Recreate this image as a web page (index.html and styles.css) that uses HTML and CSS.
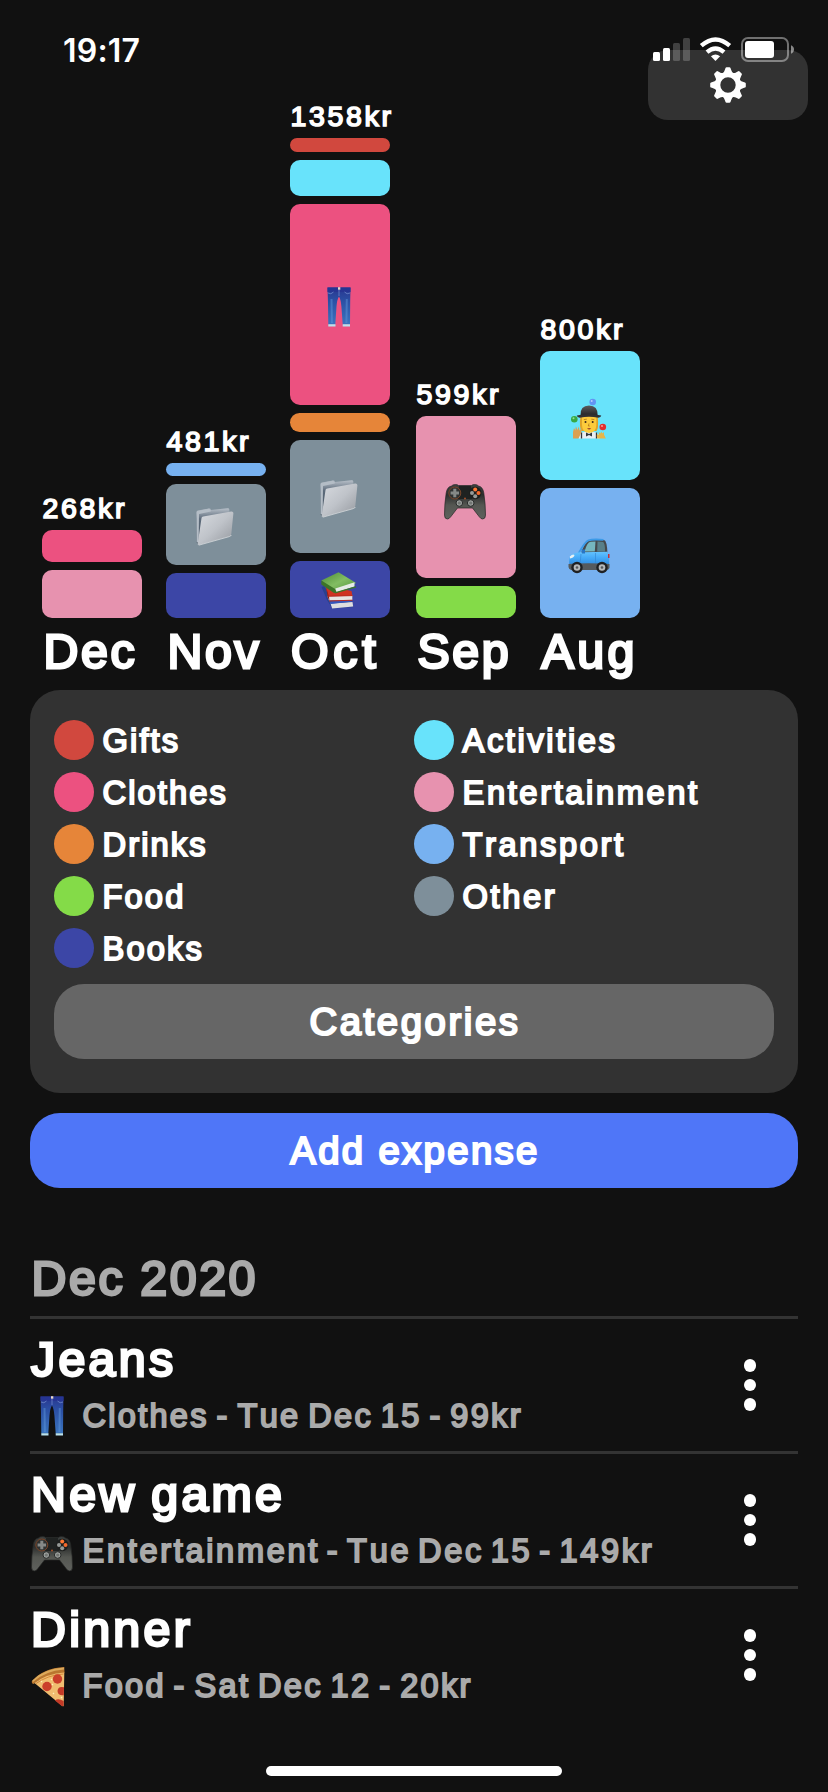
FILE: index.html
```html
<!DOCTYPE html>
<html lang="en">
<head>
<meta charset="utf-8">
<title>Expenses</title>
<link rel="stylesheet" href="styles.css">
</head>
<body>
<svg class="sprite" aria-hidden="true">
  <defs>
    <linearGradient id="gDenim" x1="0" y1="0" x2="0" y2="1"><stop offset="0" stop-color="#28368f"/><stop offset=".35" stop-color="#2b4fa4"/><stop offset="1" stop-color="#3a74be"/></linearGradient>
    <linearGradient id="gFolder" x1="0" y1="0" x2="1" y2="1"><stop offset="0" stop-color="#d8dbe0"/><stop offset=".5" stop-color="#bfc3c9"/><stop offset="1" stop-color="#93979d"/></linearGradient>
    <linearGradient id="gBack" x1="0" y1="0" x2="0" y2="1"><stop offset="0" stop-color="#b9c1ca"/><stop offset=".3" stop-color="#5d6b7b"/><stop offset="1" stop-color="#46525f"/></linearGradient>
    <linearGradient id="gPad" x1="0" y1="0" x2="0" y2="1"><stop offset="0" stop-color="#3e4241"/><stop offset=".3" stop-color="#2c2e2d"/><stop offset=".6" stop-color="#555752"/><stop offset="1" stop-color="#5f615d"/></linearGradient>
    <linearGradient id="gCar" x1="0" y1="0" x2="0" y2="1"><stop offset="0" stop-color="#63c3ff"/><stop offset=".4" stop-color="#45aaf8"/><stop offset="1" stop-color="#2c84d8"/></linearGradient>
    <linearGradient id="gBook" x1="0" y1="0" x2="1" y2="1"><stop offset="0" stop-color="#4c8b35"/><stop offset=".5" stop-color="#82bd62"/><stop offset="1" stop-color="#4f9238"/></linearGradient>
    <linearGradient id="gHat" x1="0" y1="0" x2="0" y2="1"><stop offset="0" stop-color="#5c5c5e"/><stop offset="1" stop-color="#242426"/></linearGradient>
  </defs>
  <symbol id="jeans" viewBox="0 0 42 42">
    <path d="M9.500 1.500h23l-.3 14-.2 23h-7.300l-1.300-18q-.6-7-2.400-10-2 3-2.500 10l-1.200 18H10.300l-.3-21z" fill="url(#gDenim)"/>
    <path d="M9.500 1.500h23v4.500h-23z" fill="#263593"/>
    <path d="M20 1.200h2.300v2.500H20z" fill="#e9d9c8"/>
    <path d="M10 7q3 2 5.500-1M32 7q-3 2-5.500-1M21 4v6" fill="none" stroke="#6f86cc" stroke-width=".8"/>
    <path d="M13.500 13l.4 24M28.800 13l-.4 24" stroke="#5b93d8" stroke-width="2" opacity=".5"/>
    <path d="M10.300 38.300h7.200v2.200h-7.200zM24.700 38.300H32v2.200h-7.300z" fill="#b9e2ee"/>
  </symbol>
  <symbol id="folder" viewBox="0 0 42 42">
    <path d="M2.500 6.300q0-1.500 1.500-1.800l11-1.900q1.600-.2 1.800 1.400l16.500-1.800q2-.3 2 1.200l.2 25-31.500 9q-1.200 0-1.300-1.200z" fill="url(#gBack)"/>
    <path d="M2.500 6.500q0-1.500 1.500-1.800l11-1.900 1.800 1.200v1.500L5 8l-.3 29-2-1z" fill="#b4bdc6"/>
    <path d="M7.500 12.300q.1-1.500 1.700-1.800l28-5q2.300-.2 2.200 1.800L37.300 28q-.2 2-2 2.500L5 39q-1.500.3-1.300-1.300z" fill="url(#gFolder)"/>
    <path d="M37.300 29q-.4 1.200-2 1.600L4.800 39.200" fill="none" stroke="#d6d9dc" stroke-width=".8"/>
  </symbol>
  <symbol id="books" viewBox="0 0 42 42">
    <path d="M3.500 16l3-1 4 9 24 7 1 5-21 1.500L9 29z" fill="#28408e"/>
    <path d="M12.500 32.500l22-1.500.7 4.500-21 2z" fill="#dedee0"/>
    <path d="M11 30.500l14-2 10 2-22 2.600z" fill="#3557bd"/>
    <path d="M7.500 14.500l26 5.500 1 5.200-24.500.6z" fill="#cf3322"/>
    <path d="M9.500 25.500l24.800-.8v4.200l-23.300.6z" fill="#e8e4e1"/>
    <path d="M8 16l2 11 1.500 3-.5-4.500z" fill="#8e1d16"/>
    <path d="M9.500 25.200l25-.6M11 30l23.500-.8" stroke="#b92c20" stroke-width="1"/>
    <path d="M3.300 9.500L20.500 1.300 38.200 12 17.500 21z" fill="url(#gBook)"/>
    <path d="M3.300 9.500v4L16 22l3-.5-1.500-3.300z" fill="#3c7428"/>
    <path d="M17.300 17.500L36.500 11.300v4.200L18.500 21.300z" fill="#e6ebe6"/>
    <path d="M17 21.800l21-6" stroke="#3a7729" stroke-width="1.200"/>
  </symbol>
  <symbol id="pad" viewBox="0 0 42 42">
    <path d="M7.500 8q1-1.500 4-1.500 2 0 3 1h13q1-1 3-1 3 0 4 1.500Q39 9 39.800 15q1.700 11 1.700 22 0 3.800-2.700 4-2 0-3.500-2.200L28.500 30h-15l-6.800 8.800Q5.200 41 3.200 41 .5 40.800.5 37q0-11 1.700-22Q3 9 7.500 8z" fill="url(#gPad)" stroke="#252625" stroke-width=".7"/>
    <path d="M15 8h12l1 13h-14z" fill="#1f2221"/>
    <circle cx="10.800" cy="15" r="6" fill="#303332" stroke="#7b4528" stroke-width="1"/>
    <path d="M9.300 10.800h3v2.700H15v3h-2.700v2.700h-3v-2.700H6.600v-3h2.700z" fill="#858987"/>
    <circle cx="31.200" cy="15" r="6.200" fill="#1d1f1e"/>
    <circle cx="31.200" cy="11.600" r="2" fill="#ff7733"/><circle cx="34.500" cy="15" r="2" fill="#f46a2d"/><circle cx="28" cy="15" r="2" fill="#969a98"/><circle cx="31.200" cy="18.300" r="2" fill="#969a98"/>
    <circle cx="15.300" cy="25" r="3.300" fill="#9a9e9b" stroke="#292b2a"/><circle cx="26.700" cy="25" r="3.300" fill="#9a9e9b" stroke="#292b2a"/>
    <circle cx="15.300" cy="25" r="1.600" fill="#727673"/><circle cx="26.700" cy="25" r="1.600" fill="#727673"/>
    <circle cx="21" cy="20.500" r="1" fill="#a5502a"/>
  </symbol>
  <symbol id="juggler" viewBox="0 0 42 42">
    <circle cx="24.700" cy="5" r="3.300" fill="#6295f3"/><circle cx="6.300" cy="22.300" r="3.300" fill="#37a844"/><circle cx="34.800" cy="30" r="3.300" fill="#e22d2d"/>
    <circle cx="23.700" cy="4" r="1" fill="#b6cffd"/><circle cx="5.500" cy="21.300" r="1" fill="#8fe099"/><circle cx="34" cy="29" r="1" fill="#ff9a9a"/>
    <path d="M10.500 41.500q0-6 6-6.500h9q6 .5 6 6.500z" fill="#e9edf2"/>
    <path d="M13.500 35.500v6M28.500 35.500v6" stroke="#33363b" stroke-width="1.300"/>
    <path d="M12.300 20h17.500q1 12-1.300 14h-15q-2.300-3-1.200-14z" fill="#dfa428"/>
    <path d="M14 19h14.300v9q0 7.500-7.200 8-7.100-.5-7.100-8z" fill="#fccb3c"/>
    <circle cx="17.500" cy="25" r="1" fill="#3b281d"/><circle cx="24.700" cy="25" r="1" fill="#3b281d"/>
    <path d="M15.800 22.600l3-.4M23.300 22.200l3 .4M21 26.500l-.7 2.500h1.500" fill="none" stroke="#af771b" stroke-width=".8"/>
    <path d="M19 31.400q2.100-1 4.200 0-2.100 2.300-4.200 0z" fill="#99422a"/>
    <path d="M18 35.500l3 1.500 3-1.500v4L21 38l-3 1.500z" fill="#33363b"/>
    <path d="M12.500 18.500Q12 8.500 21 8.500t8.700 10z" fill="url(#gHat)"/>
    <path d="M8.800 18.500q12.200-3 24.500 0-.3 2-3 2.300-9.300-2-18.600 0-2.700-.3-2.900-2.300z" fill="#303033"/>
    <path d="M5 41.500V35l1-4 1.300 2.500.6-4.300 1.500 3.800 1.500-3.600.5 4.100 2.400-2-.5 4-2.800 6z" fill="#dca052"/>
    <path d="M29.500 41.500q-1.500-3 0-4.500l1.500 1-.2-3 1.700 1.500.7-2 1.200 2 1.600-1.500v2.500l1.800 4z" fill="#e7b64a"/>
  </symbol>
  <symbol id="car" viewBox="0 0 42 42">
    <path d="M13 19.500q3-10 7-12.500Q24 4.500 36 6q3 .5 3.500 13.500z" fill="#45494d"/>
    <path d="M10.500 19.500Q17 7.500 20.500 6.300q4-1.300 15-.5" fill="none" stroke="#3b9ae8" stroke-width="1.800"/>
    <path d="M16.500 17.500q2.500-9 6-9.700L27.500 7.500 26.800 17.500z" fill="#75b6bf"/>
    <path d="M29.500 7.500l5.500.5q2 .5 2 9.500h-7.800z" fill="#587f89"/>
    <path d="M1.500 33q-1-7 .8-11.500Q6 18.500 13 18.200l26.500-.5q2.300 5 1.500 15.300z" fill="url(#gCar)"/>
    <path d="M27.500 19v13M13 20l-1 11" stroke="#3689d6" stroke-width=".7"/>
    <path d="M13.500 15.500h3.500v4h-3z" fill="#2876c6"/>
    <path d="M1.800 22.500q3-3 4.700-1.500-.3 2.500-4.500 3.500z" fill="#e7f0f2"/><path d="M40 20h1.500v4H40z" fill="#c52f36"/>
    <path d="M.5 30q20-1.500 41 0v4q-1 2-3 2H3q-2.500-1-2.500-3z" fill="#555a5d"/>
    <circle cx="9" cy="33.500" r="5.700" fill="#1f2123"/><circle cx="34" cy="33.500" r="5.700" fill="#1f2123"/>
    <circle cx="9" cy="33.500" r="3.300" fill="#b5b8b9"/><circle cx="34" cy="33.500" r="3.300" fill="#b5b8b9"/>
    <circle cx="9" cy="33.500" r="1.300" fill="#55595c"/><circle cx="34" cy="33.500" r="1.300" fill="#55595c"/>
  </symbol>
  <symbol id="pizza" viewBox="0 0 42 42">
    <path d="M.7 16.500Q12 3 33.300 2l.2 6Q16 9 2.500 19q-2-.5-1.800-2.500z" fill="#b9762f"/>
    <path d="M1.200 15.500Q13 3.500 33 2.500v2Q14 6 2 17z" fill="#dcaa5c"/>
    <path d="M3.500 18Q16 8.500 33.300 7.500L32.700 41q-.8.700-2-.5z" fill="#f0bd70"/>
    <path d="M5 18.500Q17 10 32.500 9" fill="none" stroke="#d58939" stroke-width="1"/>
    <circle cx="26.500" cy="14" r="4.700" fill="#cb3f2b"/><circle cx="16" cy="21.500" r="4.700" fill="#cb3f2b"/>
    <path d="M33 22.300q-6-1.500-6.500 3.700.5 5 6.300 4.200zM24 35.500q3-2.500 8.700.5L32.600 41l-1.600.2z" fill="#c33a27"/>
    <path d="M10 16l1 1M20 14l1 1M22 28l1 1M30 33l1-1M21 20l1-1" stroke="#fff0ba" stroke-width="1.300"/>
  </symbol>
</svg>

<div class="screen">
  <header class="status">
    <span class="clock">19:17</span>
    <svg class="status-icons" width="142" height="26" viewBox="0 0 142 26" fill="#fff">
      <rect x="0" y="15" width="7" height="9" rx="1.500"/><rect x="10" y="11" width="7" height="13" rx="1.500"/>
      <g opacity=".2"><rect x="20" y="6" width="7" height="18" rx="1.500"/><rect x="30" y="1" width="7" height="23" rx="1.500"/></g>
      <path d="M62.500 24l-4.600-4.700q4.600-3.400 9.200 0z"/>
      <g fill="none" stroke="#fff" stroke-width="4.300"><path d="M48.300 8.700q14.200-12.600 28.400 0"/><path d="M54 15.200q8.500-7.400 17 0"/></g>
      <rect x="89" y="1" width="46" height="23" rx="6" fill="none" stroke="#fff" stroke-opacity=".4" stroke-width="2"/>
      <rect x="92" y="4" width="29" height="17" rx="3"/>
      <path d="M138 8.300q3 1.300 3 4.200t-3 4.200z" opacity=".5"/>
    </svg>
  </header>

  <button class="settings" aria-label="Settings">
    <svg width="36" height="36" viewBox="-18 -18 36 36" fill="#fff">
      <defs><path id="tooth" d="M-6.500-11Q-3.700-12-3-15.500L-2.500-17Q-2.200-17.800-1.400-17.800H1.400Q2.200-17.800 2.500-17L3-15.500Q3.700-12 6.500-11L0-9z"/></defs>
      <circle r="10.200" fill="none" stroke="#fff" stroke-width="5"/>
      <use href="#tooth"/><use href="#tooth" transform="rotate(45)"/><use href="#tooth" transform="rotate(90)"/><use href="#tooth" transform="rotate(135)"/><use href="#tooth" transform="rotate(180)"/><use href="#tooth" transform="rotate(225)"/><use href="#tooth" transform="rotate(270)"/><use href="#tooth" transform="rotate(315)"/>
    </svg>
  </button>

  <section class="chart">
    <div class="column">
      <div class="amount">268kr</div>
      <div class="bars"><div class="bar clothes" style="height:32px"></div><div class="bar entertainment" style="height:48px"></div></div>
      <div class="month">Dec</div>
    </div>
    <div class="column">
      <div class="amount">481kr</div>
      <div class="bars"><div class="bar transport" style="height:13px"></div><div class="bar other" style="height:81px"><svg class="emoji"><use href="#folder"/></svg></div><div class="bar books" style="height:45px"></div></div>
      <div class="month">Nov</div>
    </div>
    <div class="column wide">
      <div class="amount">1358kr</div>
      <div class="bars"><div class="bar gifts" style="height:14px"></div><div class="bar activities" style="height:36px"></div><div class="bar clothes" style="height:201px"><svg class="emoji"><use href="#jeans"/></svg></div><div class="bar drinks" style="height:19px"></div><div class="bar other" style="height:113px"><svg class="emoji"><use href="#folder"/></svg></div><div class="bar books" style="height:57px"><svg class="emoji"><use href="#books"/></svg></div></div>
      <div class="month month-oct">Oct</div>
    </div>
    <div class="column">
      <div class="amount">599kr</div>
      <div class="bars"><div class="bar entertainment" style="height:162px"><svg class="emoji"><use href="#pad"/></svg></div><div class="bar food" style="height:32px"></div></div>
      <div class="month">Sep</div>
    </div>
    <div class="column">
      <div class="amount">800kr</div>
      <div class="bars"><div class="bar activities" style="height:129px"><svg class="emoji"><use href="#juggler"/></svg></div><div class="bar transport" style="height:130px"><svg class="emoji"><use href="#car"/></svg></div></div>
      <div class="month month-aug">Aug</div>
    </div>
  </section>

  <section class="panel">
    <div class="legend">
      <div class="legend-col">
        <div class="key"><i class="dot gifts"></i><span>Gifts</span></div>
        <div class="key"><i class="dot clothes"></i><span>Clothes</span></div>
        <div class="key"><i class="dot drinks"></i><span>Drinks</span></div>
        <div class="key"><i class="dot food"></i><span>Food</span></div>
        <div class="key"><i class="dot books"></i><span>Books</span></div>
      </div>
      <div class="legend-col loose">
        <div class="key"><i class="dot activities"></i><span>Activities</span></div>
        <div class="key"><i class="dot entertainment"></i><span>Entertainment</span></div>
        <div class="key"><i class="dot transport"></i><span>Transport</span></div>
        <div class="key"><i class="dot other"></i><span>Other</span></div>
      </div>
    </div>
    <button class="button secondary">Categories</button>
  </section>

  <button class="button primary">Add expense</button>

  <h2 class="heading">Dec 2020</h2>
  <ul class="list">
    <li class="row">
      <div><div class="title">Jeans</div><div class="detail"><svg class="emoji"><use href="#jeans"/></svg><span class="tight">Clothes - Tue Dec 15 - 99kr</span></div></div>
      <div class="more"><i></i><i></i><i></i></div>
    </li>
    <li class="row">
      <div><div class="title">New game</div><div class="detail"><svg class="emoji"><use href="#pad"/></svg><span>Entertainment - Tue Dec 15 - 149kr</span></div></div>
      <div class="more"><i></i><i></i><i></i></div>
    </li>
    <li class="row">
      <div><div class="title">Dinner</div><div class="detail"><svg class="emoji"><use href="#pizza"/></svg><span class="tight">Food - Sat Dec 12 - 20kr</span></div></div>
      <div class="more"><i></i><i></i><i></i></div>
    </li>
  </ul>
  <div class="home-bar"></div>
</div>
</body>
</html>
```

FILE: styles.css
```css
* { box-sizing: border-box; }
body {
  margin: 0;
  background: #111;
  color: #fff;
  font-family: "Liberation Sans", Arial, sans-serif;
  font-kerning: none;
}
.sprite { position: absolute; width: 0; height: 0; }
.screen {
  position: relative;
  width: 828px;
  height: 1792px;
  overflow: hidden;
  display: flex;
  flex-direction: column;
}

/* Status bar floats over the content */
.status {
  position: absolute;
  inset: 0 0 auto 0;
  z-index: 2;
  display: flex;
  justify-content: space-between;
  padding: 37px 33px 0 63px;
}
.clock {
  font: 600 32px/27px Inter, sans-serif;
  letter-spacing: .2px;
}
.settings {
  position: absolute;
  top: 50px;
  right: 20px;
  width: 160px;
  height: 70px;
  padding: 0 1px 0 0;
  border: 0;
  border-radius: 20px;
  background: #323232;
  display: flex;
  align-items: center;
  justify-content: center;
}

/* Chart */
.chart {
  height: 690px;
  flex: none;
  display: flex;
  align-items: flex-end;
  gap: 24px;
  padding: 0 0 11px 42px;
}
.column { width: 100px; }
.column.wide { width: 102px; }
.amount {
  padding-left: .5px;
  margin-bottom: 5px;
  font-size: 28.5px;
  line-height: 34px;
  letter-spacing: 2.65px;
  white-space: nowrap;
  -webkit-text-stroke: 1.6px #fff;
}
.bars { display: flex; flex-direction: column; gap: 8px; width: 100px; }
.bar {
  border-radius: 10px;
  display: flex;
  align-items: center;
  justify-content: center;
  padding: 4px 3px 0 0;
}
.emoji { width: 42px; height: 42px; flex: none; display: block; }
.month {
  margin-top: 5px;
  padding-left: 1.5px;
  font-size: 48.3px;
  line-height: 56px;
  letter-spacing: 2.6px;
  -webkit-text-stroke: 2.8px #fff;
}
.month-oct { letter-spacing: 4.8px; padding-left: 1px; }
.month-aug { letter-spacing: 3.5px; }

.gifts { background: #d1483e; }
.clothes { background: #ec5180; }
.drinks { background: #e68539; }
.food { background: #84db48; }
.books { background: #3c46a6; }
.activities { background: #68e3fb; }
.entertainment { background: #e792af; }
.transport { background: #77b1f0; }
.other { background: #7e8f9a; }

/* Legend panel */
.panel {
  flex: none;
  height: 403px;
  margin: 0 30px;
  padding: 30px 24px 0;
  border-radius: 30px;
  background: #323232;
}
.legend { display: grid; grid-template-columns: 1fr 1fr; height: 264px; }
.legend-col { display: flex; flex-direction: column; gap: 12px; letter-spacing: 2.1px; }
.legend-col.loose { letter-spacing: 2.6px; }
.key {
  display: flex;
  gap: 8.5px;
  height: 40px;
  font-size: 32.7px;
  line-height: 40px;
  -webkit-text-stroke: 1.9px #fff;
}
.key span { padding-top: 1px; }
.dot { width: 40px; height: 40px; border-radius: 50%; }

.button {
  flex: none;
  height: 75px;
  border: 0;
  border-radius: 30px;
  padding: 0 0 0 2px;
  color: #fff;
  font: 38.3px/75px "Liberation Sans", Arial, sans-serif;
  letter-spacing: 2.6px;
  -webkit-text-stroke: 2.2px #fff;
}
.secondary { width: 100%; background: #666; }
.primary { margin: 20px 30px 0; background: #4f76f8; letter-spacing: 2.35px; }

/* Expense list */
.heading {
  margin: 62px 30px 10px;
  padding-left: 1.5px;
  font-size: 48.3px;
  line-height: 56px;
  font-weight: 400;
  letter-spacing: 2.6px;
  word-spacing: -1px;
  color: #aaa;
  -webkit-text-stroke: 2.8px #aaa;
}
.list { list-style: none; margin: 0 30px; padding: 0; }
.row {
  display: flex;
  justify-content: space-between;
  height: 135px;
  border-top: 3px solid #333;
  padding: 11.5px 42px 0 0;
}
.title {
  padding-left: 1px;
  font-size: 48.3px;
  line-height: 56px;
  letter-spacing: 3.3px;
  word-spacing: -3px;
  -webkit-text-stroke: 2.8px #fff;
}
.detail {
  display: flex;
  align-items: center;
  gap: 10px;
  margin: 8.5px 0 0 .5px;
  height: 42px;
  font-size: 32.5px;
  line-height: 42px;
  letter-spacing: 2.7px;
  word-spacing: -4.9px;
  color: #aaa;
  -webkit-text-stroke: 1.9px #aaa;
}
.detail .tight { letter-spacing: 2.3px; word-spacing: -3.5px; }
.more {
  display: flex;
  flex-direction: column;
  gap: 7.1px;
  padding-top: 28.5px;
}
.more i { width: 12.5px; height: 12.5px; border-radius: 50%; background: #fff; }

.home-bar {
  position: absolute;
  left: 266px;
  bottom: 16px;
  width: 296px;
  height: 10px;
  border-radius: 5px;
  background: #fff;
}
```
